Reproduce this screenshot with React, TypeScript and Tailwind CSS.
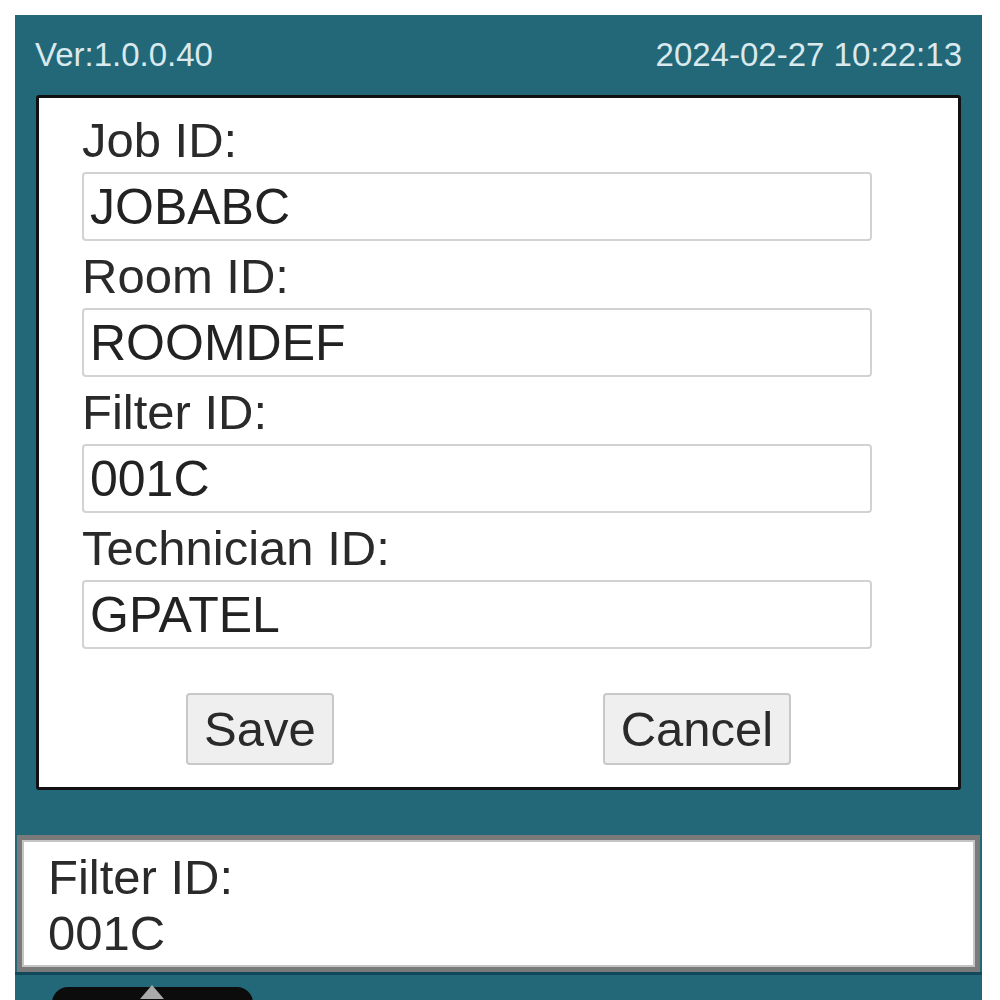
import React, { useState } from "react";

const fields = [
  { key: "job", label: "Job ID:", value: "JOBABC" },
  { key: "room", label: "Room ID:", value: "ROOMDEF" },
  { key: "filter", label: "Filter ID:", value: "001C" },
  { key: "tech", label: "Technician ID:", value: "GPATEL" },
];

const App = () => {
  const [form, setForm] = useState<Record<string, string>>({
    job: "JOBABC",
    room: "ROOMDEF",
    filter: "001C",
    tech: "GPATEL",
  });

  const handleChange = (e: React.ChangeEvent<HTMLInputElement>) => {
    setForm({ ...form, [e.target.name]: e.target.value });
  };

  return (
    <div className="min-h-[1000px] bg-white pt-[15px] pl-[15px] font-['Liberation_Sans',Arial,sans-serif]">
      <div className="w-[967px] bg-[#226878] pb-[60px]">
        <div className="flex justify-between px-[20px] py-[21px] text-[33px] leading-[38px] text-[#d9e9ed]">
          <span>Ver:1.0.0.40</span>
          <span>2024-02-27 10:22:13</span>
        </div>

        <div className="mx-[21px] rounded-[3px] border-[3px] border-[#111] bg-white pt-[14px] pb-[22px]">
          <div className="pl-[43px] w-[876px]">
            {fields.map((f, i) => (
              <div key={f.key} className={i > 0 ? "mt-[7px]" : ""}>
                <label className="block text-[49px] leading-[56px] text-[#2a2a2a]">{f.label}</label>
                <input
                  name={f.key}
                  value={form[f.key]}
                  onChange={handleChange}
                  className="mt-[4px] block h-[69px] w-[790px] rounded-[4px] border-2 border-[#d2d2d2] bg-white px-[6px] text-[50px] leading-[58px] text-[#222] outline-none"
                />
              </div>
            ))}
          </div>
          <div className="mt-[44px] flex pl-[147px]">
            <button className="h-[72px] rounded-[4px] border-2 border-[#c8c8c8] bg-[#efefef] px-[16px] text-[49px] leading-[56px] text-[#2a2a2a]">
              Save
            </button>
            <button className="ml-[269px] h-[72px] rounded-[4px] border-2 border-[#c8c8c8] bg-[#efefef] px-[16px] text-[49px] leading-[56px] text-[#2a2a2a]">
              Cancel
            </button>
          </div>
        </div>

        <div className="mt-[45px] mx-[2px] border-[5px] border-[#7a7a7a] bg-white pl-[26px] pt-[9px] pb-[6px] shadow-[inset_0_0_0_2px_#c4c4c4] text-[49px] leading-[56px] text-[#2a2a2a]">
          <div>Filter ID:</div>
          <div>001C</div>
        </div>
        <div className="h-[3px] bg-[#12495a]" />

        <div className="ml-[37px] mt-[12px] relative h-[40px] w-[201px] rounded-t-[16px] bg-[#0c0c0c]">
          <div className="absolute left-[88px] -top-[2px] h-0 w-0 border-x-[12px] border-b-[14px] border-x-transparent border-b-[#aaa]" />
        </div>
      </div>
    </div>
  );
};

export default App;
